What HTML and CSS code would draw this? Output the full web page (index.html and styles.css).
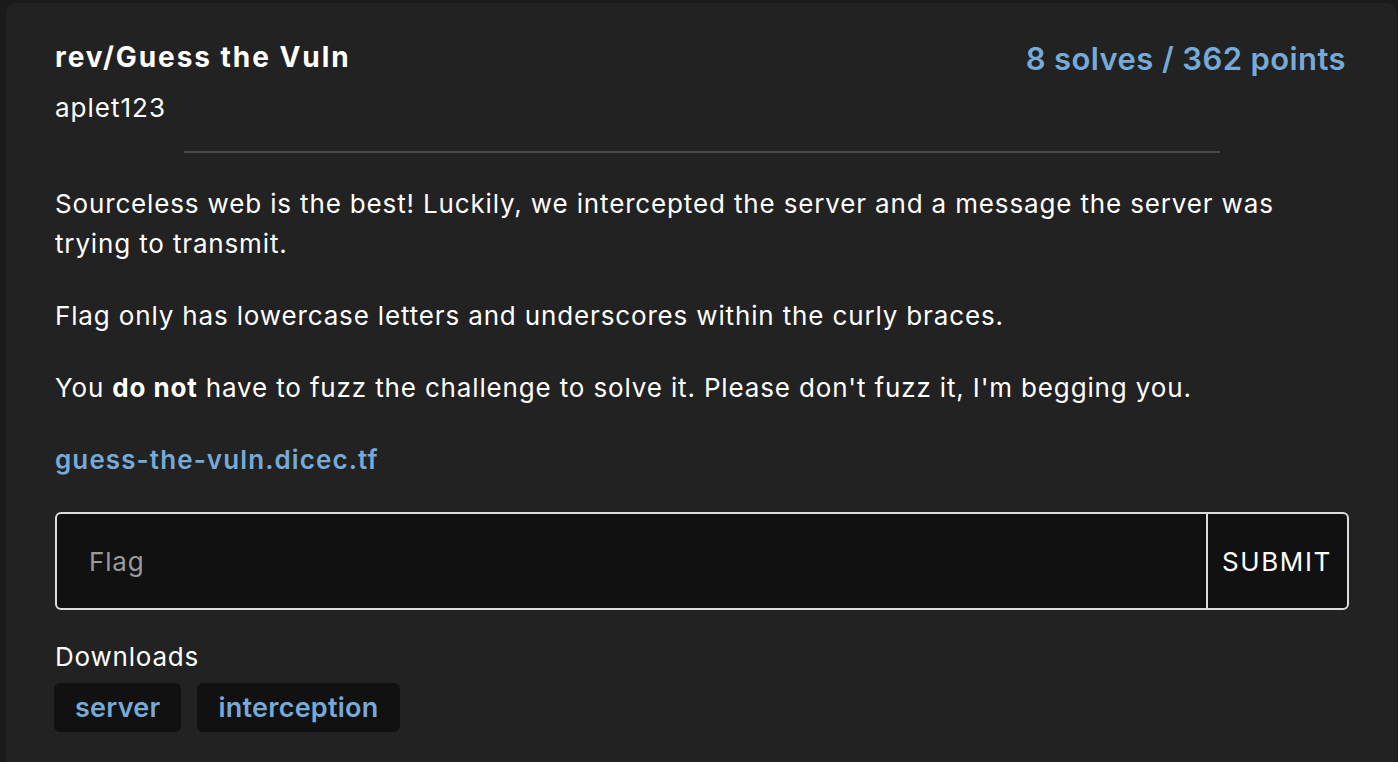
FILE: index.html
```html
<!DOCTYPE html>
<html>
<head>
<meta charset="utf-8">
<link rel="stylesheet" href="styles.css">
</head>
<body>
<div class="card">
  <div class="head">
    <div class="titles">
      <h1 class="title">rev/Guess the Vuln</h1>
      <div class="author">aplet123</div>
    </div>
    <div class="points">8 solves / 362 points</div>
  </div>
  <hr class="sep">
  <div class="desc">
    <p>Sourceless web is the best! Luckily, we intercepted the server and a message the server was trying to transmit.</p>
    <p>Flag only has lowercase letters and underscores within the curly braces.</p>
    <p>You <strong>do not</strong> have to fuzz the challenge to solve it. Please don't fuzz it, I'm begging you.</p>
    <p><a class="link" href="#">guess-the-vuln.dicec.tf</a></p>
  </div>
  <form class="flagform">
    <input class="flaginput" type="text" placeholder="Flag">
    <button class="submit" type="button">SUBMIT</button>
  </form>
  <div class="dl-label">Downloads</div>
  <div class="tags">
    <a class="tag" href="#">server</a>
    <a class="tag" href="#">interception</a>
  </div>
</div>
</body>
</html>
```
FILE: styles.css
```css
html, body {
  margin: 0;
  padding: 0;
  background: #1a1a1a;
  height: 100%;
  overflow: hidden;
}
body {
  font-family: Inter, "Noto Sans", sans-serif;
  color: #fff;
  padding: 3px 1px 0 6px;
  box-sizing: border-box;
}
.card {
  background: #222222;
  border-radius: 10px;
  padding: 37px 48px 40px 49px;
  min-height: 800px;
}
.head {
  display: flex;
  justify-content: space-between;
  align-items: flex-start;
}
.title {
  margin: 0;
  font-size: 28px;
  font-weight: 700;
  line-height: 34px;
  letter-spacing: 1.95px;
}
.author {
  font-size: 26px;
  line-height: 34px;
  margin-top: 17px;
  letter-spacing: 1px;
}
.points {
  font-size: 31px;
  font-weight: 600;
  color: #76aad8;
  line-height: 40px;
  margin-top: -1px;
  margin-right: 3px;
  letter-spacing: 0.4px;
}
.sep {
  border: 0;
  height: 2px;
  background: #4a4a4a;
  margin: 26px 129px 0 129px;
}
.desc {
  margin-top: 31px;
  font-size: 26px;
  line-height: 40px;
  letter-spacing: 0.85px;
}
.desc p {
  margin: 0 0 32px 0;
}
.desc strong {
  font-weight: 700;
}
.link {
  color: #76aad8;
  font-weight: 600;
  text-decoration: none;
  letter-spacing: 1.1px;
}
.flagform {
  display: flex;
  margin: 0;
  border: 2px solid #dcdcdc;
  border-radius: 6px;
  background: #111111;
  height: 98px;
  box-sizing: border-box;
  overflow: hidden;
}
.flaginput {
  flex: 1;
  min-width: 0;
  background: transparent;
  border: 0;
  outline: none;
  color: #fff;
  font-family: inherit;
  font-size: 26px;
  letter-spacing: 0.8px;
  padding: 0 0 0 32px;
}
.flaginput::placeholder {
  color: #9a9a9a;
}
.submit {
  background: transparent;
  border: 0;
  border-left: 2px solid #dcdcdc;
  color: #fff;
  font-family: inherit;
  font-size: 26px;
  letter-spacing: 1.6px;
  padding: 0 14px 0 14px;
  width: 141px;
  text-align: left;
}
.dl-label {
  font-size: 26px;
  line-height: 36px;
  margin-top: 29px;
  letter-spacing: 0.8px;
}
.tags {
  display: flex;
  gap: 16px;
  margin-top: 8px;
  margin-left: -1px;
}
.tag {
  background: #111111;
  border-radius: 6px;
  color: #76aad8;
  font-size: 27px;
  font-weight: 600;
  letter-spacing: 0.25px;
  text-decoration: none;
  padding: 0 21px;
  height: 49px;
  line-height: 49px;
}
```
